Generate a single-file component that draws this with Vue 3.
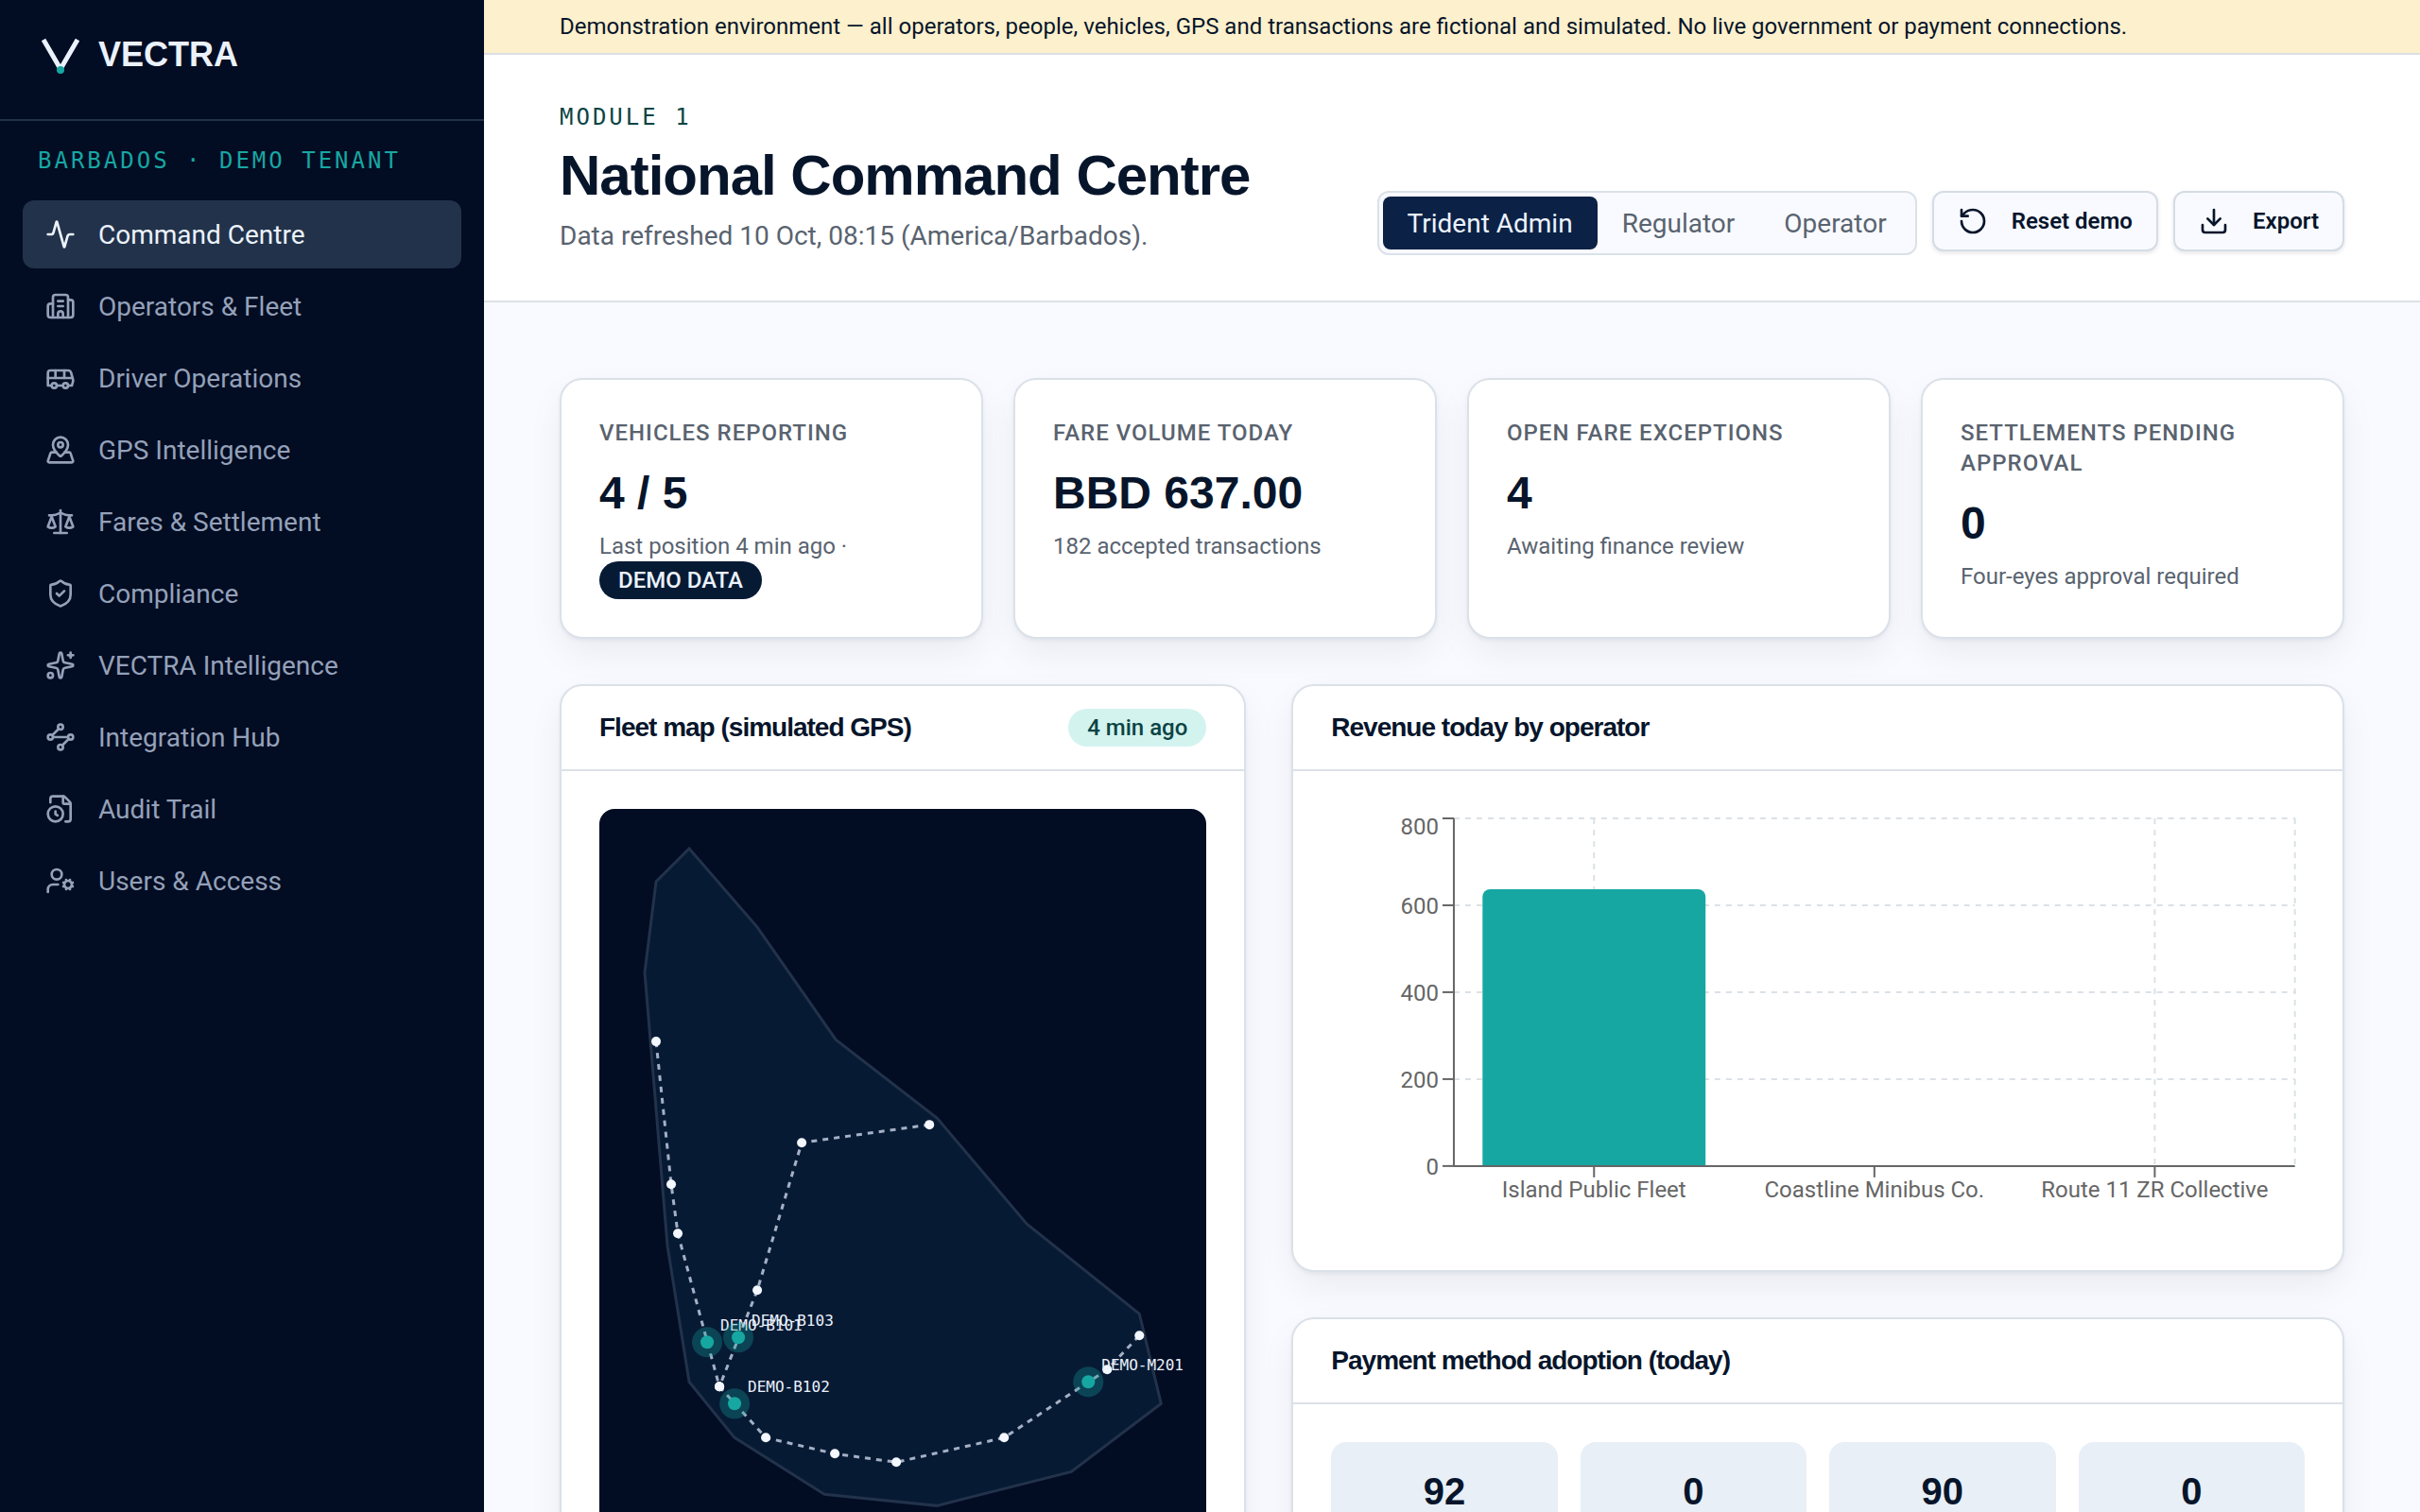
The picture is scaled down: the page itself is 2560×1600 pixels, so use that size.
<script setup>
import { ref } from 'vue'

const navItems = [
  { label: 'Command Centre', paths: ['M22 12h-2.48a2 2 0 0 0-1.93 1.46l-2.35 8.36a.25.25 0 0 1-.48 0L9.24 2.18a.25.25 0 0 0-.48 0l-2.35 8.36A2 2 0 0 1 4.49 12H2'] },
  { label: 'Operators & Fleet', paths: ['M10 12h4', 'M10 8h4', 'M14 21v-3a2 2 0 0 0-4 0v3', 'M6 10H4a2 2 0 0 0-2 2v7a2 2 0 0 0 2 2h16a2 2 0 0 0 2-2V9a2 2 0 0 0-2-2h-2', 'M6 21V5a2 2 0 0 1 2-2h8a2 2 0 0 1 2 2v16'] },
  { label: 'Driver Operations', paths: ['M8 6v6', 'M15 6v6', 'M2 12h19.6', 'M18 18h3s.5-1.7.8-2.8c.1-.4.2-.8.2-1.2 0-.4-.1-.8-.2-1.2l-1.4-5C20.1 6.8 19.1 6 18 6H4a2 2 0 0 0-2 2v10h3', 'M9 18h5'], circles: [[7, 18, 2], [16, 18, 2]] },
  { label: 'GPS Intelligence', paths: ['M18 8c0 3.613-3.869 7.429-5.393 8.795a1 1 0 0 1-1.214 0C9.87 15.429 6 11.613 6 8a6 6 0 0 1 12 0', 'M8.714 14h-3.71a1 1 0 0 0-.948.683l-2.004 6A1 1 0 0 0 3 22h18a1 1 0 0 0 .948-1.316l-2-6a1 1 0 0 0-.949-.684h-3.712'], circles: [[12, 8, 2]] },
  { label: 'Fares & Settlement', paths: ['m16 16 3-8 3 8c-.87.65-1.92 1-3 1s-2.13-.35-3-1Z', 'm2 16 3-8 3 8c-.87.65-1.92 1-3 1s-2.13-.35-3-1Z', 'M7 21h10', 'M12 3v18', 'M3 7h2c2 0 5-1 7-2 2 1 5 2 7 2h2'] },
  { label: 'Compliance', paths: ['M20 13c0 5-3.5 7.5-7.66 8.95a1 1 0 0 1-.67-.01C7.5 20.5 4 18 4 13V6a1 1 0 0 1 1-1c2 0 4.5-1.2 6.24-2.72a1.17 1.17 0 0 1 1.52 0C14.51 3.81 17 5 19 5a1 1 0 0 1 1 1z', 'm9 12 2 2 4-4'] },
  { label: 'VECTRA Intelligence', paths: ['M11.017 2.814a1 1 0 0 1 1.966 0l1.051 5.558a2 2 0 0 0 1.594 1.594l5.558 1.051a1 1 0 0 1 0 1.966l-5.558 1.051a2 2 0 0 0-1.594 1.594l-1.051 5.558a1 1 0 0 1-1.966 0l-1.051-5.558a2 2 0 0 0-1.594-1.594l-5.558-1.051a1 1 0 0 1 0-1.966l5.558-1.051a2 2 0 0 0 1.594-1.594z', 'M20 2v4', 'M22 4h-4'], circles: [[4, 20, 2]] },
  { label: 'Integration Hub', paths: ['m10.586 5.414-5.172 5.172', 'm18.586 13.414-5.172 5.172', 'M6 12h12'], circles: [[12, 20, 2], [12, 4, 2], [20, 12, 2], [4, 12, 2]] },
  { label: 'Audit Trail', paths: ['M16 22h2a2 2 0 0 0 2-2V8a2.4 2.4 0 0 0-.706-1.706l-3.588-3.588A2.4 2.4 0 0 0 14 2H6a2 2 0 0 0-2 2v2.85', 'M14 2v5a1 1 0 0 0 1 1h5', 'M8 14v2.2l1.6 1'], circles: [[8, 16, 6]] },
  { label: 'Users & Access', paths: ['M10 15H6a4 4 0 0 0-4 4v2', 'm14.305 16.53.923-.382', 'm15.228 13.852-.923-.383', 'm16.852 12.228-.383-.923', 'm16.852 17.772-.383.924', 'm19.148 12.228.383-.923', 'm19.53 18.696-.382-.924', 'm20.772 13.852.924-.383', 'm20.772 16.148.924.383'], circles: [[18, 15, 3], [9, 7, 4]] },
]

const roles = ['Trident Admin', 'Regulator', 'Operator']
const activeRole = ref(roles[0])

const stats = [
  { label: 'Vehicles reporting', value: '4 / 5', note: 'Last position 4 min ago ·', badge: 'DEMO DATA' },
  { label: 'Fare volume today', value: 'BBD 637.00', note: '182 accepted transactions' },
  { label: 'Open fare exceptions', value: '4', note: 'Awaiting finance review' },
  { label: 'Settlements pending approval', value: '0', note: 'Four-eyes approval required' },
]

const island = '71,18 143,101 226,220 333,303 428,415 547,510 570,605 475,677 333,713 214,701 119,641 71,582 48,438 24,149 36,53'
const routes = [
  [[36, 222], [52, 373], [59, 425], [103, 587]],
  [[325, 310], [190, 329], [143, 485], [103, 587]],
  [[103, 587], [152, 641], [225, 658], [290, 667], [404, 641], [513, 569], [547, 533]],
]
const vehicles = [
  { id: 'DEMO-B101', x: 90, y: 540 },
  { id: 'DEMO-B102', x: 119, y: 605 },
  { id: 'DEMO-B103', x: 123, y: 535 },
  { id: 'DEMO-M201', x: 493, y: 582 },
]

// Plot area of the revenue chart
const plot = { left: 130, right: 1020, top: 10, bottom: 378, max: 800 }
const yTicks = [0, 200, 400, 600, 800]
const yOf = (v) => plot.bottom - (v / plot.max) * (plot.bottom - plot.top)
const band = (plot.right - plot.left) / 3
const revenue = [
  { name: 'Island Public Fleet', value: 637 },
  { name: 'Coastline Minibus Co.', value: 0 },
  { name: 'Route 11 ZR Collective', value: 0 },
]
const centre = (i) => plot.left + band * (i + 0.5)
const barPath = (i, v) => {
  const x = centre(i) - 118
  return `M${x} ${plot.bottom}V${yOf(v) + 8}a8 8 0 0 1 8 -8h220a8 8 0 0 1 8 8V${plot.bottom}z`
}

const payments = [92, 0, 90, 0]
</script>

<template>
  <div class="shell">
    <aside class="sidebar">
      <div class="brand">
        <svg class="logo" viewBox="0 0 48 48" aria-hidden="true">
          <path d="M6 8 24 39 42 8" fill="none" stroke="#ebf2fc" stroke-width="5" />
          <circle cx="24" cy="40" r="4" fill="#17a7a2" />
        </svg>
        <span>VECTRA</span>
      </div>
      <p class="tenant">BARBADOS · DEMO TENANT</p>
      <nav>
        <a v-for="(item, i) in navItems" :key="item.label" href="#" :class="{ active: i === 0 }">
          <svg class="icon" viewBox="0 0 24 24" aria-hidden="true">
            <path v-for="d in item.paths" :key="d" :d="d" />
            <circle v-for="c in item.circles" :key="c.join()" :cx="c[0]" :cy="c[1]" :r="c[2]" />
          </svg>
          <span>{{ item.label }}</span>
        </a>
      </nav>
    </aside>

    <div class="page">
      <div class="banner">
        Demonstration environment — all operators, people, vehicles, GPS and transactions are fictional and simulated. No live government or payment connections.
      </div>
      <header class="page-head">
        <div>
          <p class="eyebrow">MODULE 1</p>
          <h1>National Command Centre</h1>
          <p class="refreshed">Data refreshed 10 Oct, 08:15 (America/Barbados).</p>
        </div>
        <div class="actions">
          <div class="roles" role="group" aria-label="Role">
            <button
              v-for="role in roles"
              :key="role"
              type="button"
              :class="{ active: role === activeRole }"
              @click="activeRole = role"
            >{{ role }}</button>
          </div>
          <button type="button" class="btn">
            <svg class="icon" viewBox="0 0 24 24" aria-hidden="true">
              <path d="M3 12a9 9 0 1 0 9-9 9.75 9.75 0 0 0-6.74 2.74L3 8" />
              <path d="M3 3v5h5" />
            </svg>
            Reset demo
          </button>
          <button type="button" class="btn">
            <svg class="icon" viewBox="0 0 24 24" aria-hidden="true">
              <path d="M12 15V3" />
              <path d="M21 15v4a2 2 0 0 1-2 2H5a2 2 0 0 1-2-2v-4" />
              <path d="m7 10 5 5 5-5" />
            </svg>
            Export
          </button>
        </div>
      </header>

      <main>
        <section class="stats">
          <article v-for="s in stats" :key="s.label" class="card stat">
            <h2>{{ s.label }}</h2>
            <p class="value">{{ s.value }}</p>
            <p class="note">{{ s.note }}</p>
            <span v-if="s.badge" class="badge dark">{{ s.badge }}</span>
          </article>
        </section>

        <section class="panels">
          <article class="card">
            <div class="card-head">
              <h2>Fleet map (simulated GPS)</h2>
              <span class="badge mint">4 min ago</span>
            </div>
            <div class="card-body">
              <div class="map">
                <svg viewBox="0 0 594 772" role="img" aria-label="Fleet map">
                  <polygon :points="island" class="island" />
                  <polyline v-for="(r, i) in routes" :key="i" :points="r.join(' ')" class="route" />
                  <g v-for="(r, i) in routes" :key="'stops' + i">
                    <circle v-for="p in r" :key="p.join()" :cx="p[0]" :cy="p[1]" r="5" class="stop" />
                  </g>
                  <g v-for="v in vehicles" :key="v.id">
                    <circle :cx="v.x" :cy="v.y" r="16" class="halo" />
                    <circle :cx="v.x" :cy="v.y" r="7" class="vehicle" />
                    <text :x="v.x + 14" :y="v.y - 12">{{ v.id }}</text>
                  </g>
                </svg>
              </div>
            </div>
          </article>

          <div class="column">
            <article class="card">
              <div class="card-head"><h2>Revenue today by operator</h2></div>
              <div class="card-body">
                <svg class="chart" viewBox="0 0 1030 448" role="img" aria-label="Revenue today by operator">
                  <g class="grid">
                    <line v-for="t in yTicks.slice(1)" :key="t" :x1="plot.left" :x2="plot.right" :y1="yOf(t)" :y2="yOf(t)" />
                    <line v-for="x in [centre(0), centre(2), plot.right]" :key="x" :x1="x" :x2="x" :y1="plot.top" :y2="plot.bottom" />
                  </g>
                  <template v-for="(r, i) in revenue" :key="r.name">
                    <path v-if="r.value" :d="barPath(i, r.value)" class="bar" />
                  </template>
                  <g class="axis">
                    <path :d="`M${plot.left} ${plot.top}V${plot.bottom}H${plot.right}`" />
                    <line v-for="t in yTicks" :key="t" :x1="plot.left - 12" :x2="plot.left" :y1="yOf(t)" :y2="yOf(t)" />
                    <line v-for="(r, i) in revenue" :key="r.name" :x1="centre(i)" :x2="centre(i)" :y1="plot.bottom" :y2="plot.bottom + 12" />
                  </g>
                  <text v-for="t in yTicks" :key="t" :x="plot.left - 16" :y="Math.max(yOf(t) + 9, 27)" text-anchor="end">{{ t }}</text>
                  <text v-for="(r, i) in revenue" :key="r.name" :x="centre(i)" :y="plot.bottom + 33" text-anchor="middle">{{ r.name }}</text>
                </svg>
              </div>
            </article>

            <article class="card">
              <div class="card-head"><h2>Payment method adoption (today)</h2></div>
              <div class="card-body tiles">
                <div v-for="(n, i) in payments" :key="i" class="tile">{{ n }}</div>
              </div>
            </article>
          </div>
        </section>
      </main>
    </div>
  </div>
</template>

<style>
body {
  margin: 0;
  background: #f8faff;
}
</style>

<style scoped>
.shell {
  display: flex;
  height: 100vh;
  overflow: hidden;
  font-family: Roboto, "Liberation Sans", sans-serif;
  font-size: 28px;
  color: #07152b;
}
.shell * {
  box-sizing: border-box;
}
h1, h2, p {
  margin: 0;
}
button {
  font-family: inherit;
  cursor: pointer;
}
.icon {
  flex: none;
  width: 32px;
  height: 32px;
  fill: none;
  stroke: currentColor;
  stroke-width: 2;
  stroke-linecap: round;
  stroke-linejoin: round;
}

.sidebar {
  flex: none;
  width: 512px;
  background: #020c22;
}
.brand {
  display: flex;
  align-items: center;
  gap: 16px;
  height: 128px;
  padding: 0 40px 10px;
  border-bottom: 2px solid #22324a;
  color: #ebf2fc;
  font: 700 36px/52px "Liberation Sans", sans-serif;
}
.logo {
  width: 48px;
  height: 48px;
}
.tenant {
  padding: 24px 40px;
  color: #17a7a2;
  font: 24px/36px "DejaVu Sans Mono", "Liberation Mono", monospace;
  letter-spacing: 3px;
  white-space: nowrap;
}
nav {
  display: flex;
  flex-direction: column;
  gap: 4px;
  padding: 0 24px;
}
nav a {
  display: flex;
  align-items: center;
  gap: 24px;
  height: 72px;
  padding: 0 24px;
  border-radius: 12px;
  color: #94a1b9;
  text-decoration: none;
}
nav a.active {
  background: #22324a;
  color: #ebf2fc;
}

.page {
  flex: 1;
  min-width: 0;
  background: #f8faff;
}
.banner {
  padding: 0 80px;
  border-bottom: 2px solid #dbe0e6;
  background: #fdf0cc;
  font-size: 24px;
  line-height: 56px;
}
.page-head {
  display: flex;
  justify-content: space-between;
  align-items: flex-end;
  padding: 48px 80px;
  border-bottom: 2px solid #dbe2e8;
  background: #fff;
}
.eyebrow {
  color: #0b4444;
  font: 24px/36px "DejaVu Sans Mono", "Liberation Mono", monospace;
  letter-spacing: 3px;
}
h1 {
  margin: 12px 0;
  font: 700 60px/64px "Liberation Sans", sans-serif;
  letter-spacing: -1px;
}
.refreshed {
  color: #59636f;
  line-height: 40px;
}
.actions {
  display: flex;
  align-items: flex-start;
  gap: 16px;
}
.roles {
  display: flex;
  padding: 4px;
  border: 2px solid #dbe1e8;
  border-radius: 12px;
  background: #f8faff;
}
.roles button {
  height: 56px;
  padding: 0 26px;
  border: 0;
  border-radius: 8px;
  background: none;
  color: #59636f;
  font-size: 28px;
}
.roles button.active {
  background: #0b2145;
  color: #ebf2fc;
}
.btn {
  display: flex;
  align-items: center;
  gap: 25px;
  height: 64px;
  padding: 0 25px;
  border: 2px solid #d5dce5;
  border-radius: 12px;
  background: #f8faff;
  box-shadow: 0 2px 4px rgba(7, 21, 43, 0.1);
  color: #07152b;
  font-size: 24px;
  font-weight: 600;
}

main {
  display: flex;
  flex-direction: column;
  gap: 48px;
  padding: 80px;
}
.card {
  border: 2px solid #dbe1e8;
  border-radius: 24px;
  background: #fff;
  box-shadow: 0 2px 4px rgba(7, 21, 43, 0.05), 0 16px 40px -4px rgba(7, 21, 43, 0.07);
}
.stats {
  display: grid;
  grid-template-columns: repeat(4, minmax(0, 1fr));
  gap: 32px;
}
.stat {
  padding: 40px;
}
.stat h2 {
  color: #59636f;
  font-size: 24px;
  font-weight: 500;
  line-height: 32px;
  letter-spacing: 1px;
  text-transform: uppercase;
}
.value {
  margin: 16px 0 8px;
  font: 700 48px/64px "Liberation Sans", sans-serif;
}
.note {
  color: #59636f;
  font-size: 24px;
  line-height: 32px;
}
.badge {
  display: block;
  width: fit-content;
  padding: 0 20px;
  border-radius: 20px;
  font-size: 24px;
  font-weight: 500;
  line-height: 40px;
}
.badge.dark {
  background: #071a34;
  color: #ebf2fc;
}
.badge.mint {
  background: #d3f3ef;
  color: #0b4444;
}

.panels {
  display: grid;
  grid-template-columns: minmax(0, 15fr) minmax(0, 23fr);
  align-items: start;
  gap: 48px;
}
.column {
  display: flex;
  flex-direction: column;
  gap: 48px;
}
.card-head {
  display: flex;
  justify-content: space-between;
  align-items: center;
  padding: 24px 40px;
  border-bottom: 2px solid #dbe1e8;
}
.card-head h2 {
  font: 700 28px/40px "Liberation Sans", sans-serif;
  letter-spacing: -1px;
}
.card-body {
  padding: 40px;
}
.map {
  padding: 24px;
  border-radius: 16px;
  background: #020c22;
}
.map svg,
.chart {
  display: block;
  width: 100%;
}
.island {
  fill: #071a34;
  stroke: #22324a;
  stroke-width: 3;
}
.route {
  fill: none;
  stroke: #a4b0c4;
  stroke-width: 3;
  stroke-dasharray: 6 6;
}
.stop {
  fill: #f3f7ff;
}
.halo {
  fill: #17a7a2;
  opacity: 0.3;
}
.vehicle {
  fill: #17a7a2;
}
.map text {
  fill: #ebf2fc;
  font: 16px "DejaVu Sans Mono", "Liberation Mono", monospace;
}
.grid line {
  stroke: #dbe1e6;
  stroke-width: 2;
  stroke-dasharray: 6 6;
}
.bar {
  fill: #17a7a2;
}
.axis path,
.axis line {
  fill: none;
  stroke: #666;
  stroke-width: 2;
}
.chart text {
  fill: #666;
  font-size: 24px;
}
.tiles {
  display: grid;
  grid-template-columns: repeat(4, minmax(0, 1fr));
  gap: 24px;
}
.tile {
  padding: 24px;
  border-radius: 16px;
  background: #e8eff6;
  font: 700 40px/56px "Liberation Sans", sans-serif;
  text-align: center;
}
</style>
